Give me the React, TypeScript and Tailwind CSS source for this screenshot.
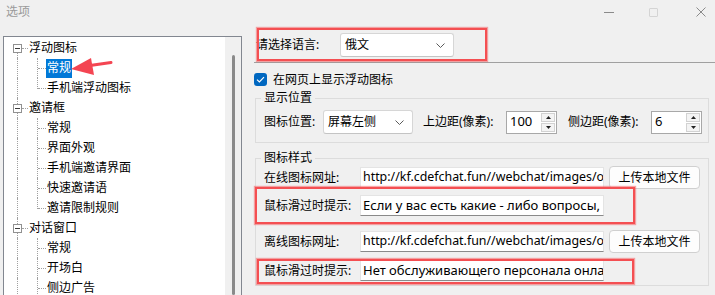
import React from 'react'

const font = { fontFamily: '"Noto Sans", "Noto Sans CJK SC", sans-serif' }

type Row = { label: string; level: 0 | 1; selected?: boolean; last?: boolean; first?: boolean }

const rows: Row[] = [
  { label: '浮动图标', level: 0, first: true },
  { label: '常规', level: 1, selected: true },
  { label: '手机端浮动图标', level: 1, last: true },
  { label: '邀请框', level: 0 },
  { label: '常规', level: 1 },
  { label: '界面外观', level: 1 },
  { label: '手机端邀请界面', level: 1 },
  { label: '快速邀请语', level: 1 },
  { label: '邀请限制规则', level: 1, last: true },
  { label: '对话窗口', level: 0 },
  { label: '常规', level: 1 },
  { label: '开场白', level: 1 },
  { label: '侧边广告', level: 1 },
]

function TreeRow({ row }: { row: Row }) {
  return (
    <div className="relative h-[20px] flex items-center">
      {/* root vertical connector */}
      <div
        className={`absolute left-[13px] w-0 border-l border-dotted border-[#a0a0a0] ${row.first ? 'top-[10px] bottom-0' : 'top-0 bottom-0'}`}
      />
      {row.level === 0 ? (
        <>
          <div className="absolute left-[9px] top-[6px] w-[9px] h-[9px] border border-[#919191] bg-white flex items-center justify-center z-10">
            <div className="w-[5px] h-px bg-[#3a3a3a]" />
          </div>
          <div className="absolute left-[18px] top-[10px] w-[6px] border-t border-dotted border-[#a0a0a0]" />
          <span className="ml-[25px] text-[12px] leading-none text-black">{row.label}</span>
        </>
      ) : (
        <>
          <div
            className={`absolute left-[33px] w-0 border-l border-dotted border-[#a0a0a0] ${row.last ? 'top-0 h-[11px]' : 'top-0 bottom-0'}`}
          />
          <div className="absolute left-[34px] top-[10px] w-[8px] border-t border-dotted border-[#a0a0a0]" />
          <span
            className={`ml-[42px] h-[19px] px-px flex items-center text-[12px] leading-none ${row.selected ? 'bg-[#0078d7] text-white' : 'text-black'}`}
          >
            {row.label}
          </span>
        </>
      )}
    </div>
  )
}

function Chevron() {
  return (
    <svg width="9" height="5" viewBox="0 0 9 5" className="shrink-0">
      <path d="M0.5 0.5 L4.5 4.5 L8.5 0.5" fill="none" stroke="#5a5a5a" strokeWidth="1" />
    </svg>
  )
}

function Select({ value, w }: { value: string; w: string }) {
  return (
    <div className={`${w} h-[24px] bg-white border border-[#d6d6d6] border-b-[#c4c4c4] rounded-[3px] flex items-center justify-between pl-[4px] pr-[8px]`}>
      <span className="text-[12px] text-black">{value}</span>
      <Chevron />
    </div>
  )
}

function Spin({ value }: { value: string }) {
  return (
    <div className="w-[51px] h-[23px] bg-white border border-[#a8a8a8] flex items-center justify-between pl-[3px] pr-px">
      <span className="text-[13px] text-black">{value}</span>
      <div className="w-[14px] flex flex-col gap-px">
        <div className="h-[9px] bg-[#f4f4f4] border border-[#d2d2d2] flex items-center justify-center">
          <svg width="5" height="3" viewBox="0 0 5 3"><path d="M2.5 0 L5 3 L0 3 Z" fill="#222" /></svg>
        </div>
        <div className="h-[9px] bg-[#f4f4f4] border border-[#d2d2d2] flex items-center justify-center">
          <svg width="5" height="3" viewBox="0 0 5 3"><path d="M0 0 L5 0 L2.5 3 Z" fill="#222" /></svg>
        </div>
      </div>
    </div>
  )
}

function TextBox({ value, size }: { value: string; size: string }) {
  return (
    <div className="w-[244px] h-[21px] bg-white border border-[#e4e4e4] border-b-[#8a8a8a] overflow-hidden flex items-center pl-[2px]">
      <span className={`${size} text-black whitespace-nowrap`}>{value}</span>
    </div>
  )
}

function Button({ label }: { label: string }) {
  return (
    <div className="ml-[5px] w-[91px] h-[23px] bg-[#fdfdfd] border border-[#d0d0d0] rounded-[4px] flex items-center justify-center text-[12px] text-black">
      {label}
    </div>
  )
}

const redBox = 'absolute border-2 border-[#f44f52] shadow-[0_0_1px_1px_rgba(244,79,82,0.5)] pointer-events-none'

export default function App() {
  return (
    <div className="w-[715px] h-[295px] bg-[#f0f0f0] overflow-hidden relative select-none" style={font}>
      {/* title bar */}
      <div className="h-[24px] flex items-center">
        <span className="ml-[6px] text-[12px] text-[#9a9a9a]">选项</span>
        <div className="ml-auto flex items-center h-full">
          <div className="w-[10px] h-px bg-[#8a8a8a] mr-[35px]" />
          <div className="w-[9px] h-[9px] border border-[#d4d4d4] rounded-[1px] mr-[38px]" />
          <svg width="10" height="10" viewBox="0 0 10 10" className="mr-[9px]">
            <path d="M0.5 0.5 L9.5 9.5 M9.5 0.5 L0.5 9.5" stroke="#8a8a8a" strokeWidth="1" />
          </svg>
        </div>
      </div>

      <div className="flex">
        {/* tree */}
        <div className="relative mt-[12px] ml-[3px] w-[239px] h-[270px] border border-[#828790] flex">
          <div className="flex-1 bg-white pt-px">
            {rows.map((r, i) => (
              <TreeRow key={i} row={r} />
            ))}
          </div>
          <div className="w-[16px] bg-[#f0f0f0] pt-[18px] pl-[7px]">
            <div className="w-[3px] h-[240px] bg-[#8a8a8a] rounded-full" />
          </div>
          {/* annotation arrow */}
          <svg className="absolute left-[62px] top-[18px]" width="50" height="24" viewBox="0 0 50 24">
            <path d="M45 7.5 L24 10.5" stroke="#f44552" strokeWidth="3" strokeLinecap="round" />
            <path d="M5 14 L25 3 L28 20 Z" fill="#f44552" />
          </svg>
        </div>

        {/* right panel */}
        <div className="ml-[12px] flex-1 flex flex-col">
          <div className="relative">
            <div className="mt-[9px] h-[24px] flex items-center">
              <span className="ml-[2px] w-[84px] text-[12px] text-black">请选择语言:</span>
              <Select value="俄文" w="w-[114px]" />
            </div>
            <div className={`${redBox} left-[3px] top-[4px] w-[230px] h-[33px]`} />
          </div>

          <div className="mt-[5px] h-px bg-[#a0a0a0]" />

          <div className="mt-[10px] h-[13px] flex items-center">
            <div className="w-[13px] h-[13px] rounded-[3px] bg-[#0067c0] flex items-center justify-center">
              <svg width="9" height="7" viewBox="0 0 9 7">
                <path d="M1 3.6 L3.4 6 L8 1.2" fill="none" stroke="white" strokeWidth="1.2" />
              </svg>
            </div>
            <span className="ml-[6px] text-[12px] text-black">在网页上显示浮动图标</span>
          </div>

          {/* group 1 */}
          <div className="relative mt-[12px] ml-px w-[454px] h-[45px] border border-[#dcdcdc]">
            <span className="absolute -top-[9px] left-[5px] px-[3px] bg-[#f0f0f0] text-[12px] leading-[16px] text-black">显示位置</span>
            <div className="mt-[11px] ml-[8px] h-[24px] flex items-center">
              <span className="w-[59px] text-[12px] text-black">图标位置:</span>
              <Select value="屏幕左侧" w="w-[90px]" />
              <span className="ml-[10px] w-[83px] text-[12px] text-black">上边距(像素):</span>
              <Spin value="100" />
              <span className="ml-[11px] w-[83px] text-[12px] text-black">侧边距(像素):</span>
              <Spin value="6" />
            </div>
          </div>

          {/* group 2 */}
          <div className="relative mt-[15px] ml-px w-[454px] h-[128px] border border-[#dcdcdc]">
            <span className="absolute -top-[9px] left-[5px] px-[3px] bg-[#f0f0f0] text-[12px] leading-[16px] text-black">图标样式</span>
            <div className="mt-[7px] ml-[8px] flex flex-col">
              <div className="h-[23px] flex items-center">
                <span className="w-[96px] text-[12px] text-black">在线图标网址:</span>
                <TextBox size="text-[12.4px]" value="http://kf.cdefchat.fun//webchat/images/online.png" />
                <Button label="上传本地文件" />
              </div>
              <div className="mt-[5px] h-[23px] flex items-center">
                <span className="w-[96px] text-[12px] text-black">鼠标滑过时提示:</span>
                <TextBox size="text-[13px]" value="Если у вас есть какие - либо вопросы, пожалуйста" />
              </div>
              <div className="mt-[13px] h-[23px] flex items-center">
                <span className="w-[96px] text-[12px] text-black">离线图标网址:</span>
                <TextBox size="text-[12.4px]" value="http://kf.cdefchat.fun//webchat/images/offline.png" />
                <Button label="上传本地文件" />
              </div>
              <div className="mt-[6px] h-[23px] flex items-center">
                <span className="w-[96px] text-[12px] text-black">鼠标滑过时提示:</span>
                <TextBox size="text-[13px]" value="Нет обслуживающего персонала онлайн" />
              </div>
            </div>
            <div className={`${redBox} -left-px top-[28px] w-[380px] h-[37px]`} />
            <div className={`${redBox} left-px top-[100px] w-[377px] h-[25px]`} />
          </div>
        </div>
      </div>
    </div>
  )
}
